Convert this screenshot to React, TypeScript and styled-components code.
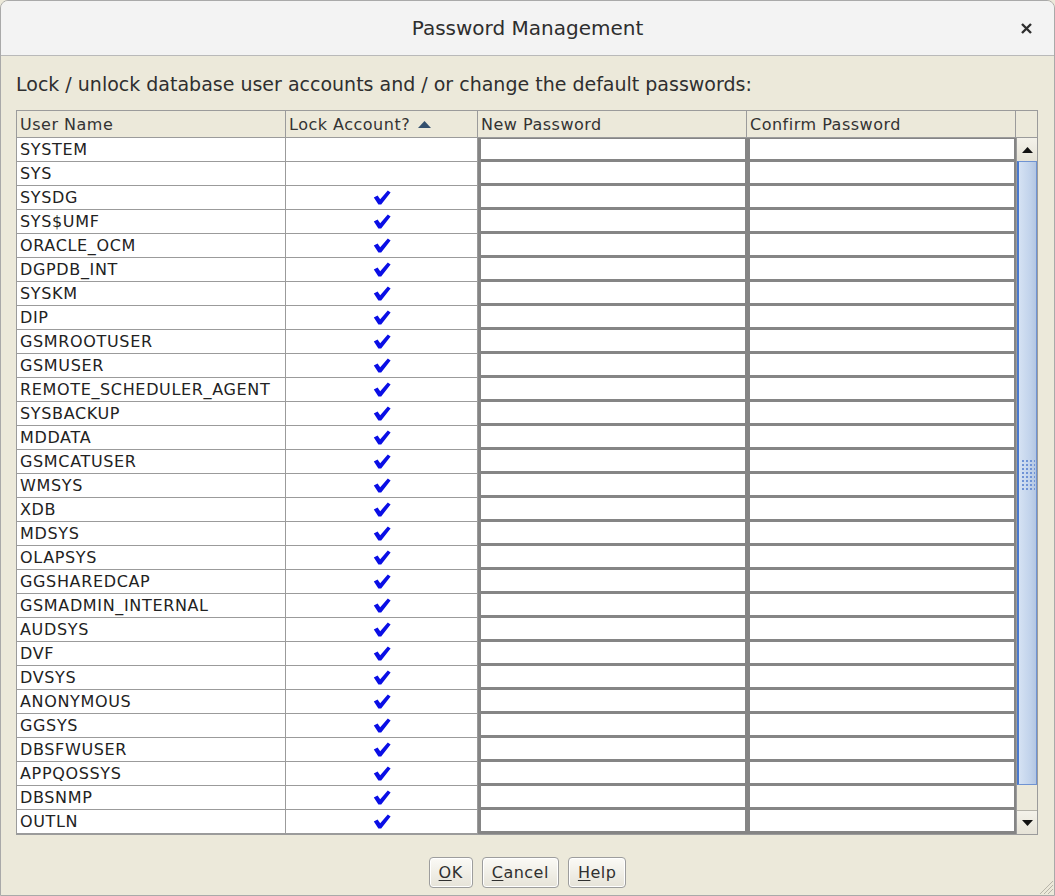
import React from 'react';
import styled, { createGlobalStyle } from 'styled-components';

const GlobalStyle = createGlobalStyle`
  html, body {
    margin: 0;
    padding: 0;
    background: #ece9da;
  }
  body {
    font-family: 'DejaVu Sans', 'Liberation Sans', sans-serif;
  }
`;

const users: { name: string; locked: boolean }[] = [
  { name: 'SYSTEM', locked: false },
  { name: 'SYS', locked: false },
  { name: 'SYSDG', locked: true },
  { name: 'SYS$UMF', locked: true },
  { name: 'ORACLE_OCM', locked: true },
  { name: 'DGPDB_INT', locked: true },
  { name: 'SYSKM', locked: true },
  { name: 'DIP', locked: true },
  { name: 'GSMROOTUSER', locked: true },
  { name: 'GSMUSER', locked: true },
  { name: 'REMOTE_SCHEDULER_AGENT', locked: true },
  { name: 'SYSBACKUP', locked: true },
  { name: 'MDDATA', locked: true },
  { name: 'GSMCATUSER', locked: true },
  { name: 'WMSYS', locked: true },
  { name: 'XDB', locked: true },
  { name: 'MDSYS', locked: true },
  { name: 'OLAPSYS', locked: true },
  { name: 'GGSHAREDCAP', locked: true },
  { name: 'GSMADMIN_INTERNAL', locked: true },
  { name: 'AUDSYS', locked: true },
  { name: 'DVF', locked: true },
  { name: 'DVSYS', locked: true },
  { name: 'ANONYMOUS', locked: true },
  { name: 'GGSYS', locked: true },
  { name: 'DBSFWUSER', locked: true },
  { name: 'APPQOSSYS', locked: true },
  { name: 'DBSNMP', locked: true },
  { name: 'OUTLN', locked: true },
];

const COLS = '269px 192px 269px 269px';

const Dialog = styled.div`
  position: relative;
  width: 1055px;
  height: 896px;
  box-sizing: border-box;
  border: 1px solid #a9a9a9;
  border-radius: 8px 8px 0 0;
  background: #ece9da;
  display: flex;
  flex-direction: column;
  overflow: hidden;
`;

const TitleBar = styled.div`
  height: 54px;
  flex-shrink: 0;
  background: #f3f3f3;
  border-bottom: 1px solid #b9b9b9;
  display: flex;
  align-items: center;
  justify-content: center;
  position: relative;
  font-size: 20px;
  color: #2e2e2e;
`;

const CloseButton = styled.div`
  position: absolute;
  right: 20px;
  top: 19px;
  width: 16px;
  height: 16px;
  display: flex;
  align-items: center;
  justify-content: center;
`;

const Body = styled.div`
  flex: 1;
  display: flex;
  flex-direction: column;
  padding: 0 0 0 15px;
`;

const Instruction = styled.div`
  font-size: 19px;
  color: #2f2f2f;
  height: 54px;
  display: flex;
  align-items: center;
  padding-top: 2px;
  box-sizing: border-box;
  white-space: nowrap;
`;

const TableFrame = styled.div`
  width: 1022px;
  box-sizing: border-box;
  border: 1px solid #9b9b9b;
  background: #ffffff;
`;

const HeaderRow = styled.div`
  display: grid;
  grid-template-columns: ${COLS} 1fr;
  height: 26px;
  background: #ece9da;
  border-bottom: 1px solid #9b9b9b;
`;

const HeaderCell = styled.div<{ $last?: boolean }>`
  font-size: 16px;
  letter-spacing: 0.5px;
  color: #333;
  display: flex;
  align-items: center;
  padding-left: 3px;
  border-right: ${(p) => (p.$last ? 'none' : '1px solid #9b9b9b')};
  box-sizing: border-box;
  white-space: nowrap;
  overflow: hidden;
  gap: 8px;
`;

const TableBody = styled.div`
  display: flex;
`;

const Rows = styled.div`
  display: flex;
  flex-direction: column;
`;

const Row = styled.div`
  display: grid;
  grid-template-columns: ${COLS};
  height: 24px;
`;

const NameCell = styled.div`
  font-size: 16px;
  letter-spacing: 0.65px;
  color: #222;
  display: flex;
  align-items: center;
  padding-left: 3px;
  box-sizing: border-box;
  border-right: 1px solid #9b9b9b;
  border-bottom: 1px solid #9b9b9b;
  white-space: nowrap;
  overflow: hidden;
`;

const LockCell = styled.div`
  display: flex;
  align-items: center;
  justify-content: center;
  box-sizing: border-box;
  border-right: 1px solid #9b9b9b;
  border-bottom: 1px solid #9b9b9b;
`;

const PasswordCell = styled.div<{ $first?: boolean }>`
  background: #ffffff;
  box-sizing: border-box;
  border-left: 3px solid #858585;
  border-right: 2px solid #858585;
  border-bottom: 3px solid #858585;
  border-top: ${(p) => (p.$first ? '1px solid #858585' : 'none')};
`;

const ScrollBar = styled.div`
  width: 21px;
  border-left: 1px solid #9b9b9b;
  background: #ece9da;
  display: flex;
  flex-direction: column;
`;

const ArrowButton = styled.div<{ $bottom?: boolean }>`
  height: 23px;
  flex-shrink: 0;
  background: linear-gradient(#f4f2ea, #e6e3d7);
  border-top: ${(p) => (p.$bottom ? '1px solid #b5b3aa' : 'none')};
  display: flex;
  align-items: center;
  justify-content: center;
`;

const Thumb = styled.div`
  height: 624px;
  box-sizing: border-box;
  border: 1px solid #6f93d2;
  border-left: 2px solid #4a78cc;
  background: linear-gradient(90deg, #d5e2f3, #c3d4ec 60%, #b3c6e2);
  display: flex;
  align-items: center;
  justify-content: center;
`;

const Track = styled.div`
  flex: 1;
  background: #ece9da;
`;

const Grip = styled.div`
  width: 14px;
  height: 32px;
  margin-top: 4px;
  background-image: radial-gradient(circle, #6f93d6 0.9px, transparent 1.4px);
  background-size: 4px 4px;
`;

const ButtonBar = styled.div`
  display: flex;
  justify-content: center;
  gap: 9px;
  padding-top: 22px;
  padding-right: 15px;
`;

const DialogButton = styled.button`
  height: 31px;
  padding: 0 9px;
  font-family: 'DejaVu Sans', 'Liberation Sans', sans-serif;
  font-size: 16px;
  letter-spacing: 0.5px;
  color: #2f2f2f;
  border: 1px solid #9d9d9d;
  border-radius: 4px;
  background: linear-gradient(#fbfaf6, #e6e3d8);
  box-shadow: inset 0 0 0 1px #ffffff;
  cursor: pointer;
  u {
    text-decoration: underline;
    text-underline-offset: 2px;
  }
`;

const ResizeGrip = styled.svg`
  position: absolute;
  right: 0;
  bottom: 0;
`;

const Check = () => (
  <svg width="18" height="15" viewBox="0 0 18 15">
    <path d="M0.8 7.6 L4.6 5.6 L7.2 9.2 L14.8 0.6 L17.6 2.4 L8.2 14.4 L5.4 14.4 Z" fill="#0a0ee6" />
  </svg>
);

const SortUp = () => (
  <svg width="13" height="7" viewBox="0 0 13 7">
    <path d="M0 7 L6.5 0 L13 7 Z" fill="#34506e" />
  </svg>
);

const Arrow = ({ down }: { down?: boolean }) => (
  <svg width="11" height="6" viewBox="0 0 11 6">
    <path d={down ? 'M0 0 L11 0 L5.5 6 Z' : 'M0 6 L11 6 L5.5 0 Z'} fill="#111" />
  </svg>
);

const App: React.FC = () => {
  return (
    <>
      <GlobalStyle />
      <Dialog>
        <TitleBar>
          Password Management
          <CloseButton>
            <svg width="11" height="11" viewBox="0 0 11 11">
              <path d="M1 1 L10 10 M10 1 L1 10" stroke="#2e2e2e" strokeWidth="2.4" />
            </svg>
          </CloseButton>
        </TitleBar>
        <Body>
          <Instruction>
            Lock / unlock database user accounts and / or change the default passwords:
          </Instruction>
          <TableFrame>
            <HeaderRow>
              <HeaderCell>User Name</HeaderCell>
              <HeaderCell>
                Lock Account? <SortUp />
              </HeaderCell>
              <HeaderCell>New Password</HeaderCell>
              <HeaderCell>Confirm Password</HeaderCell>
              <HeaderCell $last />
            </HeaderRow>
            <TableBody>
              <Rows>
                {users.map((u, i) => (
                  <Row key={u.name}>
                    <NameCell>{u.name}</NameCell>
                    <LockCell>{u.locked && <Check />}</LockCell>
                    <PasswordCell $first={i === 0} />
                    <PasswordCell $first={i === 0} />
                  </Row>
                ))}
              </Rows>
              <ScrollBar>
                <ArrowButton>
                  <Arrow />
                </ArrowButton>
                <Thumb>
                  <Grip />
                </Thumb>
                <Track />
                <ArrowButton $bottom>
                  <Arrow down />
                </ArrowButton>
              </ScrollBar>
            </TableBody>
          </TableFrame>
          <ButtonBar>
            <DialogButton>
              <u>O</u>K
            </DialogButton>
            <DialogButton>
              <u>C</u>ancel
            </DialogButton>
            <DialogButton>
              <u>H</u>elp
            </DialogButton>
          </ButtonBar>
        </Body>
        <ResizeGrip width="22" height="22" viewBox="0 0 22 22">
          <path d="M21 8 L8 21 M21 12 L12 21 M21 16 L16 21" stroke="#b8b5aa" strokeWidth="1" />
        </ResizeGrip>
      </Dialog>
    </>
  );
};

export default App;
